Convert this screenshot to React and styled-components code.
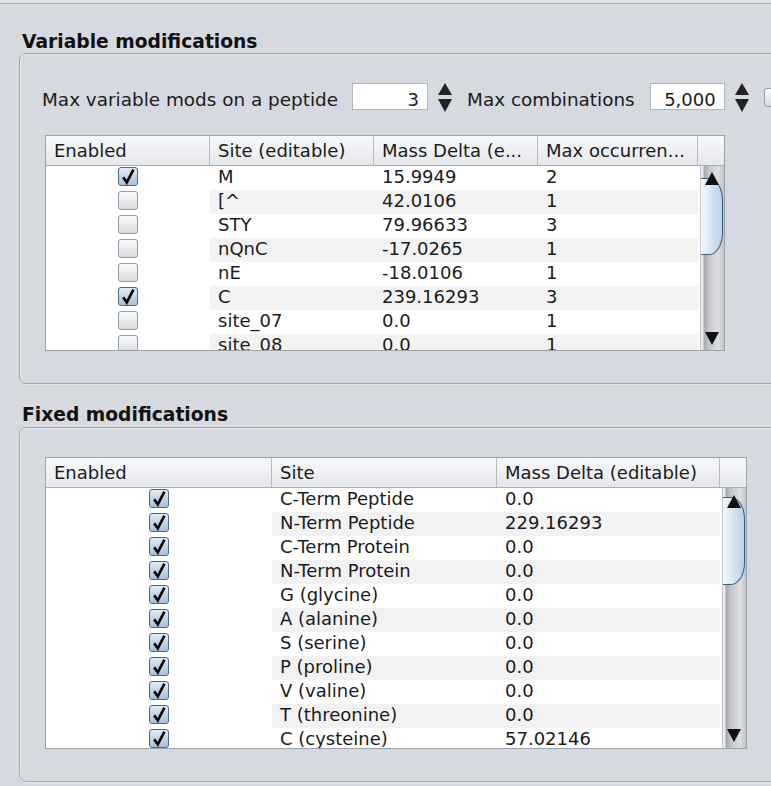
import React from 'react';
import styled, { createGlobalStyle } from 'styled-components';

const GlobalStyle = createGlobalStyle`
  html, body {
    margin: 0;
    padding: 0;
  }
  body {
    background: #d6d9df;
    font-family: "DejaVu Sans", "Liberation Sans", sans-serif;
    font-size: 18px;
    color: #1b1b1b;
    overflow: hidden;
  }
`;

const Page = styled.div`
  width: 771px;
  height: 786px;
  overflow: hidden;
`;

const TopRule = styled.div`
  height: 3px;
  background: #e1e3e7;
  border-bottom: 1px solid #a9adb3;
`;

const Section = styled.section`
  padding-left: 19px;
  margin-top: ${(p) => p.$gap}px;
`;

const Title = styled.h2`
  margin: 0 0 ${(p) => p.$below}px 3px;
  font: bold 18.7px/21px "DejaVu Sans", sans-serif;
  color: #111;
  white-space: nowrap;
`;

const Panel = styled.div`
  width: 800px;
  border: 1px solid #a2a6ad;
  border-radius: 7px;
  padding: 29px 0 32px;
  box-shadow: inset 1px 1px 0 #e4e6ea, 0 1px 0 #e6e8eb;
`;

const SpinRow = styled.div`
  display: flex;
  align-items: flex-start;
  height: 27px;
  margin: 0 0 25px 22px;
  white-space: nowrap;
`;

const Label = styled.span`
  font-size: 18.4px;
  line-height: 21px;
  padding-top: 6px;
  margin-right: ${(p) => p.$gap}px;
`;

const Field = styled.div`
  width: ${(p) => p.$w}px;
  height: 27px;
  box-sizing: border-box;
  background: #fff;
  border: 1px solid #b3b7bd;
  text-align: right;
  padding: 5px 8px 0 0;
  line-height: 21px;
`;

const SpinArrows = styled.svg`
  flex: none;
  margin: 0 14px 0 9px;
`;

const Table = styled.div`
  margin-left: 25px;
  width: ${(p) => p.$w}px;
  border: 1px solid #9ca2a9;
  background: #fff;
`;

const HeaderRow = styled.div`
  display: flex;
  height: 30px;
  box-sizing: border-box;
  border-bottom: 1px solid #a9aeb5;
  background: linear-gradient(#f7f8fa, #e5e8ec);
`;

const HeaderCell = styled.div`
  flex: none;
  width: ${(p) => p.$w}px;
  box-sizing: border-box;
  border-right: ${(p) => (p.$corner ? 'none' : '1px solid #b7bcc3')};
  padding-left: 8px;
  line-height: 29px;
  white-space: nowrap;
  overflow: hidden;
`;

const Body = styled.div`
  display: flex;
  height: ${(p) => p.$h}px;
  overflow: hidden;
`;

const Rows = styled.div`
  flex: 1;
  overflow: hidden;
`;

const Row = styled.div`
  display: flex;
  height: 24px;
`;

const Cell = styled.div`
  flex: none;
  width: ${(p) => p.$w}px;
  box-sizing: border-box;
  padding-left: 8px;
  line-height: 22px;
  white-space: nowrap;
  background: ${(p) => (p.$striped ? '#f2f2f2' : '#fff')};
`;

const CheckCell = styled.div`
  flex: none;
  width: ${(p) => p.$w}px;
  display: flex;
  align-items: center;
  justify-content: center;
  padding-bottom: 3px;
  box-sizing: border-box;
  background: #fff;
`;

const Box = styled.span`
  width: 18px;
  height: 17px;
  border: 1px solid ${(p) => (p.$on ? '#52677e' : '#979ea7')};
  border-radius: 3px;
  background: ${(p) =>
    p.$on
      ? 'linear-gradient(#e3ecf6, #a8c0d9)'
      : 'linear-gradient(#fbfbfc, #d6dade)'};
  display: inline-flex;
  align-items: center;
  justify-content: center;
  flex: none;
  svg {
    overflow: visible;
  }
`;

const EdgeBox = styled(Box)`
  margin-top: 5px;
`;

const ScrollTrack = styled.div`
  position: relative;
  flex: none;
  width: 24px;
  box-sizing: border-box;
  border-left: 1px solid #c3c6ca;
  background: linear-gradient(
    to right,
    #ececec 0,
    #ececec 2px,
    #a5a8ad 3px,
    #c5c7cb 35%,
    #dcdee1 75%,
    #bfc2c6 100%
  );
`;

const Thumb = styled.div`
  margin-top: ${(p) => p.$top}px;
  height: ${(p) => p.$h}px;
  margin-right: 1px;
  box-sizing: border-box;
  border: 1px solid #3f5c78;
  border-left: none;
  border-radius: 0 14px 14px 0 / 0 22px 22px 0;
  background: linear-gradient(to right, #f3f7fb, #d7e6f3 45%, #bad2e7);
`;

const Arrow = styled.svg`
  position: absolute;
  left: 4px;
  ${(p) => (p.$up ? `top: ${p.$off}px;` : `bottom: ${p.$off}px;`)}
`;

function Check({ on }) {
  return (
    <Box $on={on}>
      {on && (
        <svg width="14" height="15" viewBox="0 0 14 15">
          <path
            d="M2.2 8.2 L5.8 13.4 L12.4 0.6"
            fill="none"
            stroke="#000"
            strokeWidth="2.6"
            strokeLinejoin="miter"
          />
        </svg>
      )}
    </Box>
  );
}

function Spinner({ label, value, labelGap, width }) {
  return (
    <>
      <Label $gap={labelGap}>{label}</Label>
      <Field $w={width}>{value}</Field>
      <SpinArrows width="16" height="30" viewBox="0 0 16 30">
        <polygon points="8,0 15,12 1,12" fill="#222" />
        <polygon points="1,16 15,16 8,29" fill="#222" />
      </SpinArrows>
    </>
  );
}

function ScrollBar({ thumbTop, thumbHeight, upOff, downOff }) {
  return (
    <ScrollTrack>
      <Thumb $top={thumbTop} $h={thumbHeight} />
      <Arrow $up $off={upOff} width="14" height="13" viewBox="0 0 14 13">
        <polygon points="7,0 14,13 0,13" fill="#111" />
      </Arrow>
      <Arrow $off={downOff} width="14" height="13" viewBox="0 0 14 13">
        <polygon points="0,0 14,0 7,13" fill="#111" />
      </Arrow>
    </ScrollTrack>
  );
}

function ModTable({ columns, rows, bodyHeight, scroll }) {
  const total = columns.reduce((s, c) => s + c.w, 0) + 24 + 2;
  return (
    <Table $w={total}>
      <HeaderRow>
        {columns.map((c) => (
          <HeaderCell key={c.title} $w={c.w}>
            {c.title}
          </HeaderCell>
        ))}
        <HeaderCell $w={24} $corner />
      </HeaderRow>
      <Body $h={bodyHeight}>
        <Rows>
          {rows.map((r, i) => (
            <Row key={i}>
              <CheckCell $w={columns[0].w}>
                <Check on={r[0]} />
              </CheckCell>
              {r.slice(1).map((v, j) => (
                <Cell key={j} $w={columns[j + 1].w} $striped={i % 2 === 1}>
                  {v}
                </Cell>
              ))}
            </Row>
          ))}
        </Rows>
        <ScrollBar {...scroll} />
      </Body>
    </Table>
  );
}

const variableColumns = [
  { title: 'Enabled', w: 164 },
  { title: 'Site (editable)', w: 164 },
  { title: 'Mass Delta (e...', w: 164 },
  { title: 'Max occurren...', w: 160 },
];

const variableRows = [
  [true, 'M', '15.9949', '2'],
  [false, '[^', '42.0106', '1'],
  [false, 'STY', '79.96633', '3'],
  [false, 'nQnC', '-17.0265', '1'],
  [false, 'nE', '-18.0106', '1'],
  [true, 'C', '239.16293', '3'],
  [false, 'site_07', '0.0', '1'],
  [false, 'site_08', '0.0', '1'],
];

const fixedColumns = [
  { title: 'Enabled', w: 226 },
  { title: 'Site', w: 225 },
  { title: 'Mass Delta (editable)', w: 223 },
];

const fixedRows = [
  [true, 'C-Term Peptide', '0.0'],
  [true, 'N-Term Peptide', '229.16293'],
  [true, 'C-Term Protein', '0.0'],
  [true, 'N-Term Protein', '0.0'],
  [true, 'G (glycine)', '0.0'],
  [true, 'A (alanine)', '0.0'],
  [true, 'S (serine)', '0.0'],
  [true, 'P (proline)', '0.0'],
  [true, 'V (valine)', '0.0'],
  [true, 'T (threonine)', '0.0'],
  [true, 'C (cysteine)', '57.02146'],
];

export default function App() {
  return (
    <Page>
      <GlobalStyle />
      <TopRule />

      <Section $gap={27}>
        <Title $below={1}>Variable modifications</Title>
        <Panel>
          <SpinRow>
            <Spinner label="Max variable mods on a peptide" value="3" labelGap={14} width={76} />
            <Spinner label="Max combinations" value="5,000" labelGap={15} width={75} />
            <EdgeBox />
          </SpinRow>
          <ModTable
            columns={variableColumns}
            rows={variableRows}
            bodyHeight={184}
            scroll={{ thumbTop: 12, thumbHeight: 77, upOff: 6, downOff: 5 }}
          />
        </Panel>
      </Section>

      <Section $gap={20}>
        <Title $below={2}>Fixed modifications</Title>
        <Panel>
          <ModTable
            columns={fixedColumns}
            rows={fixedRows}
            bodyHeight={260}
            scroll={{ thumbTop: 9, thumbHeight: 88, upOff: 7, downOff: 6 }}
          />
        </Panel>
      </Section>
    </Page>
  );
}
